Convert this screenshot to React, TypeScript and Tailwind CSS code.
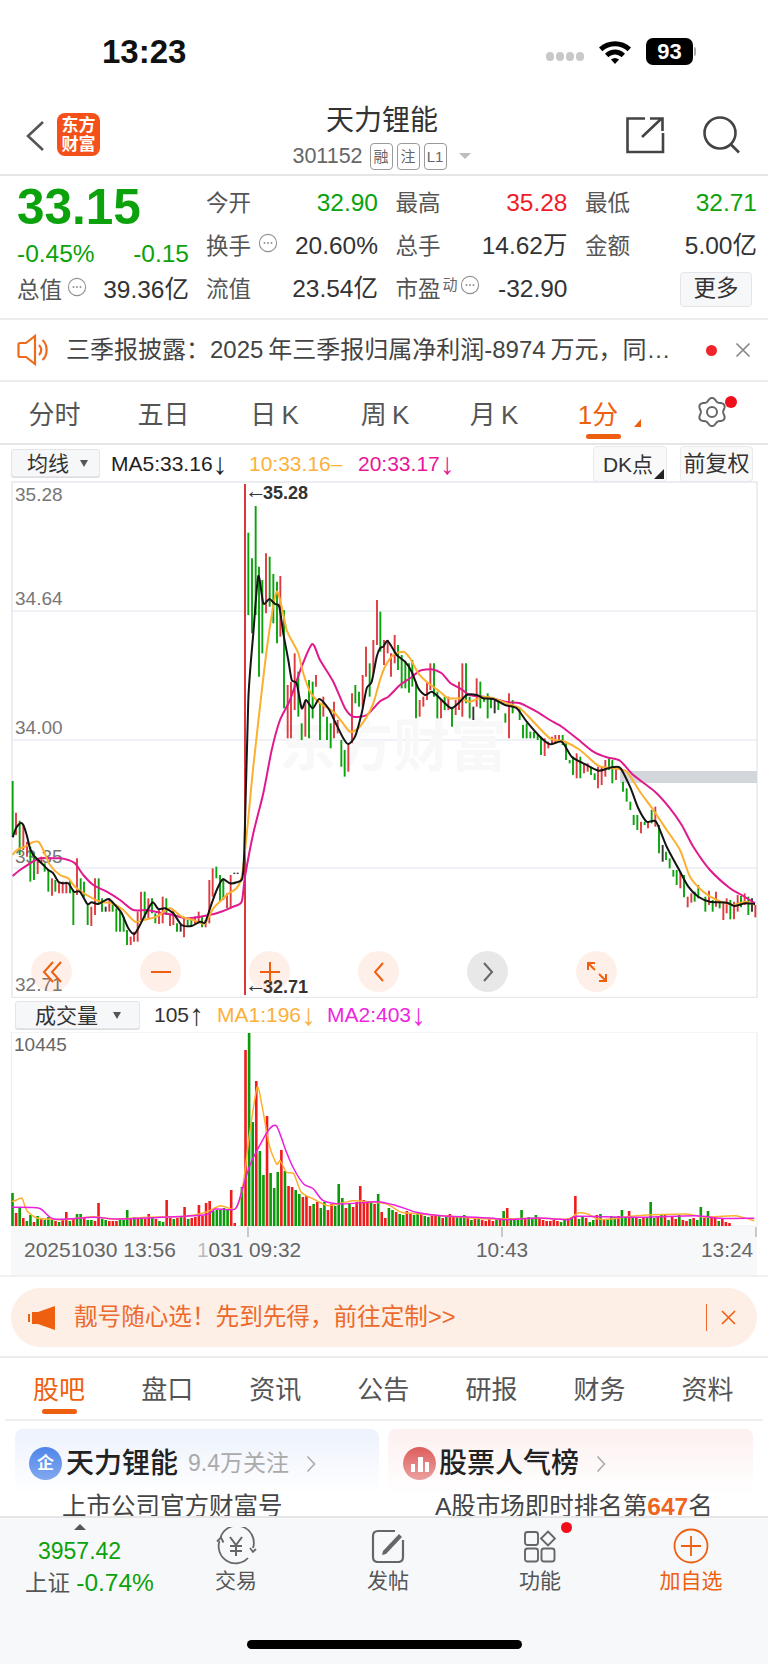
import React from "react";

const G = "#0ba20b", R = "#de3b3f", K = "#333333";
type P = [number, number];

const parseCandles = (s: string, ox: number) =>
  s.split(" ").map((t) => {
    const [x, a, b, c] = t.split(",");
    return { x: ox + Number(x) / 3, y1: 500 + Number(a) / 3, y2: 500 + Number(b) / 3, c: c === "g" ? G : c === "r" ? R : K };
  });

const c1 = parseCandles(
  "38,843,1010,g 48,938,1005,r 59,962,1065,g 70,975,1050,r 81,1025,1070,r 91,1040,1145,g 102,1060,1140,g 113,1075,1122,r 124,1070,1090,r 134,1090,1115,g 145,1110,1175,g 156,1135,1187,r 166,1140,1175,g 177,1145,1180,r 188,1145,1180,r 199,1145,1180,r 210,1140,1180,g 220,1170,1275,g 231,1075,1185,r 242,1135,1180,g 252,1145,1190,g 263,1215,1275,g 274,1220,1278,r 285,1135,1245,r 296,1135,1210,g 306,1195,1235,g 317,1220,1235,k 328,1195,1235,r 338,1210,1235,g 349,1225,1295,g 360,1235,1295,g 371,1250,1295,g 381,1290,1335,g 392,1310,1335,r 402,1295,1325,r 413,1235,1325,r 423,1175,1260,r 434,1175,1255,g 445,1195,1255,r 456,1195,1240,g 466,1240,1270,g 477,1225,1272,r 488,1190,1270,r 499,1195,1245,g 510,1245,1278,r 520,1230,1275,r 531,1270,1295,g 542,1275,1295,k 552,1255,1312,r 563,1260,1280,g 574,1260,1278,g 585,1250,1275,r 596,1235,1265,r 606,1250,1282,g 617,1260,1282,r 628,1140,1270,r 638,1105,1190,r 649,1100,1135,g 660,1125,1205,g 670,1135,1200,g 681,1180,1225,r 692,1125,1225,r 703,1118,1122,k 713,1118,1122,k 745,98,345,g 756,175,400,g 767,18,345,g 777,200,530,g 787,240,460,g 798,160,340,r 809,170,320,g 820,222,370,g 831,245,430,g 841,228,410,r 852,330,625,g 863,555,715,r 873,545,715,r 884,460,630,r 895,515,650,g 905,670,720,g 916,600,710,r 927,540,715,g 938,545,655,g 948,525,560,r 960,610,720,g 970,590,650,r 981,650,720,g 992,670,745,g 1002,605,715,r 1013,660,700,r 1024,720,800,g 1034,750,830,g 1045,730,815,r 1056,580,730,r 1066,555,610,g 1077,575,620,g 1088,525,620,r 1098,440,530,r 1109,490,590,g 1120,420,520,r 1131,300,435,r",
  0
);
const c2 = parseCandles(
  "1,335,455,g 12,420,495,r 23,420,460,r 33,460,530,r 44,405,490,r 54,435,510,g 65,465,565,g 76,485,565,g 87,490,578,g 97,480,560,g 108,545,655,g 119,600,650,r 130,590,620,r 141,548,600,r 151,490,570,r 162,490,590,g 172,575,655,g 183,600,655,r 194,590,630,g 205,590,630,r 216,620,680,g 227,600,645,r 237,545,630,r 247,490,650,r 258,490,610,g 269,590,655,g 280,620,660,k 290,535,620,r 301,545,625,g 312,590,605,g 323,580,655,g 333,595,625,g 344,595,640,k 355,605,630,g 376,640,668,g 387,580,715,r 398,600,640,g 419,625,660,g 429,675,715,g 440,670,715,g 451,695,715,g 462,695,715,g 473,705,720,g 483,710,765,g 494,715,768,r 505,725,745,r 516,710,735,r 526,705,730,r 537,705,725,r 548,705,735,g 558,730,780,g 569,780,790,g 579,770,825,g 590,760,835,r 601,770,835,g 612,790,820,r 623,790,815,r 633,800,825,g 644,820,840,g 654,800,865,r 665,800,855,r 676,780,830,r 687,775,810,g 697,780,850,g 708,800,840,r 729,845,875,g 740,865,905,g 751,905,930,g 761,945,975,g 772,945,990,g 783,965,1000,r 794,965,975,g 804,965,985,r 815,930,970,g 826,920,980,r 837,975,1060,g 848,1035,1085,k 858,1055,1080,g 869,1075,1105,g 880,1110,1130,g 890,1110,1155,g 901,1115,1165,r 912,1125,1192,g 923,1190,1222,r 934,1180,1208,r 944,1175,1205,g 955,1155,1195,g 976,1190,1235,g 987,1172,1215,r 998,1200,1235,g 1008,1175,1220,r 1019,1205,1225,g 1030,1205,1260,r 1040,1195,1240,r 1051,1200,1258,g 1062,1205,1258,r 1073,1185,1235,r 1083,1188,1222,g 1094,1180,1215,r 1105,1190,1245,g 1116,1195,1235,k 1126,1215,1252,r",
  380
);

const pts = (s: string, f: (x: number, y: number) => P): P[] =>
  s.split(" ").map((t) => {
    const [x, y] = t.split(",").map(Number);
    return f(x, y);
  });
const L = (x: number, y: number): P => [x / 3, 500 + y / 3];
const Rt = (x: number, y: number): P => [380 + x / 3, 500 + y / 3];
const V = (x: number, y: number): P => [x / 2.0417, 990 + y / 3];

const smooth = (p: P[]) => {
  let d = `M${p[0][0].toFixed(1)} ${p[0][1].toFixed(1)}`;
  for (let i = 0; i < p.length - 1; i++) {
    const a = p[Math.max(0, i - 1)], b = p[i], c = p[i + 1], e = p[Math.min(p.length - 1, i + 2)];
    const k = 0.12;
    d += `C${(b[0] + (c[0] - a[0]) * k).toFixed(1)} ${(b[1] + (c[1] - a[1]) * k).toFixed(1)} ${(c[0] - (e[0] - b[0]) * k).toFixed(1)} ${(c[1] - (e[1] - b[1]) * k).toFixed(1)} ${c[0].toFixed(1)} ${c[1].toFixed(1)}`;
  }
  return d;
};

const black = [
  ...pts("38,1012 48,985 60,970 70,975 80,1005 90,1045 100,1065 115,1080 130,1095 145,1110 160,1120 175,1145 190,1150 205,1150 222,1175 240,1175 262,1212 275,1207 295,1212 325,1197 345,1215 365,1240 385,1285 403,1302 420,1275 440,1235 458,1207 475,1227 495,1225 520,1240 545,1275 575,1278 600,1265 615,1268 630,1225 650,1170 668,1138 690,1150 710,1147 727,1135 733,1050 745,600 760,400 775,228 790,310 808,297 825,312 838,320 850,400 865,480 875,540 890,550 905,625 918,600 938,625 958,597 985,625 1005,665 1030,715 1045,732 1065,710 1085,640 1100,565 1115,545 1130,470", L),
  ...pts("0,445 10,440 22,422 35,440 50,465 75,485 95,515 115,565 135,585 155,575 175,590 195,610 215,625 240,605 260,585 290,585 310,595 340,597 375,615 410,625 440,665 480,710 510,733 545,725 575,770 610,790 655,812 690,803 720,803 750,860 775,925 800,965 828,965 860,1040 895,1105 925,1160 955,1190 990,1205 1040,1208 1065,1218 1095,1210 1125,1212", Rt),
];
const orange = [
  ...pts("38,1065 50,1050 75,1040 95,1028 115,1025 130,1050 150,1095 180,1125 205,1135 225,1160 260,1185 300,1205 335,1210 370,1230 405,1265 440,1258 470,1250 510,1225 545,1250 580,1260 615,1270 640,1225 680,1185 725,1130 760,800 800,450 830,275 860,390 880,430 895,460 910,520 930,575 960,610 985,625 1005,640 1025,665 1050,695 1075,685 1100,650 1120,610", L),
  ...pts("0,540 15,500 40,465 70,455 90,475 115,520 140,545 180,575 205,595 240,595 270,605 310,590 340,595 380,610 420,625 460,665 510,715 555,725 600,750 655,797 700,805 740,815 780,875 820,930 860,990 900,1050 930,1130 970,1175 1010,1200 1060,1215 1095,1205 1125,1215", Rt),
];
const magenta = [
  ...pts("38,1128 60,1110 90,1090 120,1075 150,1075 180,1075 205,1080 225,1090 250,1125 280,1155 320,1175 360,1200 400,1230 440,1230 480,1238 520,1245 560,1255 600,1250 650,1240 700,1220 725,1205 735,1130 760,1000 790,880 815,750 840,660 870,600 905,500 937,432 960,480 1000,545 1035,625 1060,650 1100,645", L),
  ...pts("0,604 25,590 60,555 90,535 120,512 155,508 185,520 210,548 240,565 270,585 310,590 345,597 385,607 420,610 470,635 510,660 545,680 590,715 640,755 680,772 720,782 760,825 825,875 870,925 905,975 940,1040 990,1110 1050,1165 1085,1185 1125,1210", Rt),
];
const vOrange = pts("24,638 35,632 45,628 55,665 75,687 100,690 130,692 190,683 230,690 300,685 380,682 420,670 450,650 480,660 495,600 510,430 525,295 535,350 550,470 565,525 572,515 585,550 600,555 615,610 640,630 670,650 720,635 760,640 790,645 820,670 860,675 900,680 1000,690 1100,688 1160,690 1180,672 1200,675 1220,690 1250,690 1300,680 1400,675 1440,685 1500,680 1540,695", V);
const vMagenta = pts("24,655 80,658 110,690 190,685 240,690 330,685 420,677 440,660 480,660 495,600 510,530 530,470 550,420 565,412 585,490 600,540 620,585 640,600 660,635 700,645 770,638 810,650 850,670 900,680 1000,687 1030,692 1100,687 1160,692 1180,682 1300,685 1420,680 1470,688 1540,688", V);

const vol =
  "33g 13r 18g 8r 5g 11g 4r 10g 8r 6g 9g 7g 5r 4g 6r 14r 5g 7r 12g 12g 8r 6g 6g 5r 23r 7g 6g 5r 5r 5r 6g 6g 16g 8r 9g 7r 7g 7r 12r 9g 7r 5g 4g 26r 8r 7g 8r 10g 19r 7g 8r 9r 21r 10r 23r 25r 15g 16g 16g 18g 17g 36r 3r 0g 39g 176r 193g 104g 145r 75g 51g 110r 53g 38g 54g 76r 55g 40r 39r 36g 32g 29r 30r 20r 22g 24r 18g 24g 16r 22r 20g 42g 28g 18r 22g 19r 24r 40r 26r 24r 24g 22r 32g 14r 8r 18g 16g 14r 12g 11g 15r 12r 11g 13g 12r 10g 9g 10r 11r 10g 8r 9g 12r 10r 9g 9g 11g 9r 6g 8r 7g 6r 5r 7r 5r 6g 8r 15g 18r 8g 7g 6g 16g 7r 9g 8g 11g 7r 6r 5r 5r 6r 5r 4g 7g 8r 9g 30r 7g 10g 8r 4g 6g 11r 12g 7r 6g 10g 9g 10r 16g 8g 15r 8g 9r 7g 8r 8g 24g 8g 10r 12g 12r 6g 9r 7r 11g 6r 5r 7g 8r 6g 19g 8r 15g 9r 10r 5g 7r 4r 3r";
const volBars = vol.split(" ").map((t, i) => ({ x: 12.5 + 3.585 * i, h: parseInt(t), c: t.endsWith("g") ? "#0a9a0a" : "#f01c1c" }));

const gearPath = (() => {
  const cx = 16, cy = 16;
  let d = "";
  for (let i = 0; i <= 96; i++) {
    const th = (i / 96) * Math.PI * 2 - Math.PI / 2;
    const r = 12.6 + 1.5 * Math.cos(6 * th + Math.PI * 3);
    const x = cx + r * Math.cos(th), y = cy + r * Math.sin(th);
    d += `${i === 0 ? "M" : "L"}${x.toFixed(2)} ${y.toFixed(2)}`;
  }
  return d + "Z";
})();

const Info = ({ className = "" }: { className?: string }) => (
  <svg width="20" height="20" viewBox="0 0 20 20" className={className}>
    <circle cx="10" cy="10" r="8.6" fill="none" stroke="#8f9296" strokeWidth="1.1" />
    <circle cx="6.5" cy="10" r="1" fill="#8f9296" />
    <circle cx="10" cy="10" r="1" fill="#8f9296" />
    <circle cx="13.5" cy="10" r="1" fill="#8f9296" />
  </svg>
);

const Cell = ({ label, value, color = "text-[#333]", extra }: { label: string; value: string; color?: string; extra?: React.ReactNode }) => (
  <div className="flex h-[43px] items-center justify-between">
    <div className="flex items-center">
      <span className="text-[22.5px] text-[#555]">{label}</span>
      {extra}
    </div>
    <span className={`text-[24.5px] ${color}`}>{value}</span>
  </div>
);

const Round = ({ children, gray }: { children: React.ReactNode; gray?: boolean }) => (
  <div className={`flex h-[41px] w-[41px] items-center justify-center rounded-full ${gray ? "bg-black/[0.09]" : "bg-[#f05a10]/[0.09]"}`}>{children}</div>
);

const Badge = ({ t }: { t: string }) => (
  <span className="ml-[4px] flex h-[27px] w-[23px] items-center justify-center rounded-[4px] border border-[#9a9a9a] text-[15px] leading-none text-[#666]">{t}</span>
);

const FootItem = ({ icon, label, color = "text-[#555]", w }: { icon: React.ReactNode; label: string; color?: string; w: string }) => (
  <div className={`flex flex-col items-center ${w}`}>
    <div className="flex h-[44px] items-center justify-center">{icon}</div>
    <span className={`mt-[-1px] text-[21px] leading-[28px] ${color}`}>{label}</span>
  </div>
);

const Arr = ({ children, className = "" }: { children: React.ReactNode; className?: string }) => (
  <span className={`text-[30px] leading-[26px] ${className}`}>{children}</span>
);

export default function App() {
  return (
    <div className="relative h-[1665px] w-[768px] overflow-hidden bg-white font-['Liberation_Sans','Noto_Sans_CJK_SC',sans-serif]">
      {/* status bar */}
      <div className="flex h-[88px] items-start">
        <span className="ml-[102px] mt-[32px] text-[33px] font-bold leading-[40px] text-[#111]">13:23</span>
        <div className="ml-auto mr-[72px] mt-[38px] flex items-center">
          <div className="mt-[10px] flex gap-[2px]">
            <i className="block h-[9px] w-[8px] rounded-[4px] bg-[#c8c9cb]" />
            <i className="block h-[9px] w-[8px] rounded-[4px] bg-[#c8c9cb]" />
            <i className="block h-[9px] w-[8px] rounded-[4px] bg-[#c8c9cb]" />
            <i className="block h-[9px] w-[8px] rounded-[4px] bg-[#c8c9cb]" />
          </div>
          <svg width="34" height="25" viewBox="0 0 34 25" className="ml-[14px]">
            <path d="M1 8.5C10 0 24 0 33 8.5L29.6 12.2C22.5 5.6 11.5 5.6 4.4 12.2Z" fill="#000" />
            <path d="M7 14.7C13 9.2 21 9.2 27 14.7L23.6 18.2C19.5 14.6 14.5 14.6 10.4 18.2Z" fill="#000" />
            <path d="M13 20.6C15.5 18.6 18.5 18.6 21 20.6L17 25Z" fill="#000" />
          </svg>
          <div className="ml-[14px] flex items-center">
            <span className="flex h-[27px] w-[47px] items-center justify-center rounded-[7px] bg-black text-[22px] font-bold leading-none text-white">93</span>
            <i className="ml-[1px] block h-[9px] w-[2px] rounded-r-[2px] bg-[#aaa]" />
          </div>
        </div>
      </div>

      {/* nav */}
      <div className="relative flex h-[88px] items-start border-b-2 border-[#e6e6e6]">
        <svg width="20" height="32" viewBox="0 0 20 32" className="ml-[25px] mt-[32px] shrink-0">
          <path d="M18 2L3 16L18 30" fill="none" stroke="#555" strokeWidth="2.6" />
        </svg>
        <div className="ml-[12px] mt-[25px] flex h-[43px] w-[43px] shrink-0 flex-col items-center justify-center rounded-[8px] bg-[#f4511a] text-[17px] font-bold leading-[19px] text-white">
          <span>东方</span>
          <span>财富</span>
        </div>
        <div className="ml-[182px] mt-[13px] flex w-[200px] flex-col items-center">
          <span className="text-[28px] leading-[40px] text-[#333]">天力锂能</span>
          <div className="mt-[1px] flex items-center">
            <span className="text-[21.5px] leading-[28px] text-[#666]">301152</span>
            <span className="ml-[3px] flex"><Badge t="融" /><Badge t="注" /><Badge t="L1" /></span>
            <svg width="14" height="8" viewBox="0 0 14 8" className="ml-[11px]"><path d="M1 1H13L7 7Z" fill="#bdbdbd" /></svg>
          </div>
        </div>
        <svg width="40" height="38" viewBox="0 0 40 38" className="ml-[143px] mt-[28px] shrink-0">
          <path d="M20 2.5H2.5V36H38V17" fill="none" stroke="#444" strokeWidth="2.6" />
          <path d="M17 21L36 3M25 2.5H37.5V15" fill="none" stroke="#444" strokeWidth="2.6" />
        </svg>
        <svg width="40" height="38" viewBox="0 0 40 38" className="ml-[37px] mt-[28px] shrink-0">
          <circle cx="18" cy="17" r="15.5" fill="none" stroke="#444" strokeWidth="2.6" />
          <path d="M29 28.5L37 36.5" stroke="#444" strokeWidth="2.6" />
        </svg>
      </div>

      {/* quote */}
      <div className="flex h-[144px] border-b-2 border-[#ececec]">
        <div className="ml-[17px] w-[172px] shrink-0">
          <div className="h-[63px] text-[49.5px] font-bold leading-[62px] text-[#0ba20b]">33.15</div>
          <div className="flex h-[30px] items-center justify-between text-[24.5px] leading-none text-[#0ba20b]">
            <span>-0.45%</span>
            <span>-0.15</span>
          </div>
          <div className="flex h-[43px] items-center justify-between">
            <div className="flex items-center">
              <span className="text-[22.5px] text-[#555]">总值</span>
              <Info className="mb-[8px] ml-[5px]" />
            </div>
            <span className="text-[24.5px] text-[#333]">39.36亿</span>
          </div>
        </div>
        <div className="ml-[17px] mt-[6px] grid w-[551px] grid-cols-[172px_172px_172px] content-start gap-x-[17.5px]">
          <Cell label="今开" value="32.90" color="text-[#0ba20b]" />
          <Cell label="最高" value="35.28" color="text-[#f01c2a]" />
          <Cell label="最低" value="32.71" color="text-[#0ba20b]" />
          <Cell label="换手" value="20.60%" extra={<Info className="mb-[8px] ml-[7px]" />} />
          <Cell label="总手" value="14.62万" />
          <Cell label="金额" value="5.00亿" />
          <Cell label="流值" value="23.54亿" />
          <Cell
            label="市盈"
            value="-32.90"
            extra={
              <span className="mb-[10px] ml-[2px] flex items-center">
                <span className="text-[15px] leading-none text-[#666]">动</span>
                <Info className="ml-[2px]" />
              </span>
            }
          />
          <div className="flex h-[43px] items-center justify-end">
            <span className="mr-[5px] flex h-[35px] w-[72px] items-center justify-center rounded-[4px] border border-[#e3e5e8] bg-[#f6f7f9] text-[22.5px] leading-none text-[#333]">更多</span>
          </div>
        </div>
      </div>

      {/* notice */}
      <div className="flex h-[62px] items-center border-b-2 border-[#ececec]">
        <svg width="32" height="34" viewBox="0 0 32 34" className="ml-[17px] shrink-0">
          <path d="M3 10H9L18 3V31L9 24H3C2 24 1.5 23.500 1.5 22.500V11.500C1.500 10.500 2 10 3 10Z" fill="none" stroke="#ee6a1c" strokeWidth="2.2" />
          <path d="M22 12C25 15 25 19 22 22M25.500 7C31 12 31 22 25.500 27" fill="none" stroke="#ee6a1c" strokeWidth="2.2" />
        </svg>
        <span className="ml-[17px] w-[590px] shrink-0 whitespace-nowrap text-[24px] text-[#444]">三季报披露：2025{"\u2009"}年三季报归属净利润-8974{"\u2009"}万元，同…</span>
        <i className="ml-[50px] block h-[11px] w-[11px] shrink-0 rounded-full bg-[#f0242c]" />
        <svg width="16" height="16" viewBox="0 0 16 16" className="ml-[18px] shrink-0">
          <path d="M1.500 1.500L14.500 14.500M14.500 1.500L1.500 14.500" stroke="#888" strokeWidth="1.700" />
        </svg>
      </div>

      {/* period tabs */}
      <div className="flex h-[63px] border-b-2 border-[#e6e6e6]">
        <div className="flex w-[109px] items-center justify-center pt-[6px] text-[26px] text-[#555]">分时</div>
        <div className="flex w-[109px] items-center justify-center pt-[6px] text-[26px] text-[#555]">五日</div>
        <div className="flex w-[113px] items-center justify-center pt-[6px] text-[26px] text-[#555]">日{"\u2009"}K</div>
        <div className="flex w-[108px] items-center justify-center pt-[6px] text-[26px] text-[#555]">周{"\u2009"}K</div>
        <div className="flex w-[110px] items-center justify-center pt-[6px] text-[26px] text-[#555]">月{"\u2009"}K</div>
        <div className="relative flex w-[105px] items-center justify-center pr-[7px] pt-[6px] text-[26px] text-[#ee5f10]">
          1分
          <span className="absolute bottom-[4px] left-[37px] h-[5px] w-[35px] rounded-[3px] bg-[#ee5f10]" />
          <svg width="7" height="8" viewBox="0 0 7 8" className="absolute left-[85px] top-[37px]"><path d="M7 0V8H0Z" fill="#ee5f10" /></svg>
        </div>
        <div className="relative flex w-[114px] items-center justify-center">
          <svg width="32" height="32" viewBox="0 0 32 32" className="mb-[2px] ml-[2px]">
            <path d={gearPath} fill="none" stroke="#666" strokeWidth="2" strokeLinejoin="round" />
            <circle cx="16" cy="16" r="5" fill="none" stroke="#666" strokeWidth="2" />
          </svg>
          <i className="absolute left-[71px] top-[14px] block h-[12px] w-[12px] rounded-full bg-[#f0101c]" />
        </div>
      </div>

      {/* chart toolbar */}
      <div className="flex h-[36px] items-start">
        <div className="ml-[11px] mt-[4px] flex h-[28px] w-[89px] items-center rounded-[3px] border border-[#e3e5e8] bg-[#f6f7f9] shadow-[0_1px_0_#dcdde0]">
          <span className="ml-[15px] text-[21px] leading-none text-[#333]">均线</span>
          <svg width="8" height="7" viewBox="0 0 8 7" className="ml-[11px]"><path d="M0 0H8L4 7Z" fill="#555" /></svg>
        </div>
        <div className="ml-[11px] mt-[5px] flex w-[470px] items-center text-[21px] leading-[28px]">
          <span className="flex w-[138px] items-center text-[#222]">MA5:33.16<Arr>↓</Arr></span>
          <span className="w-[109px] text-[#fbb13c]">10:33.16–</span>
          <span className="flex items-center text-[#e7169a]">20:33.17<Arr>↓</Arr></span>
        </div>
        <div className="relative ml-[12px] mt-[1px] flex h-[36px] w-[74px] items-center justify-center rounded-[4px] border border-[#e9eaec] bg-[#f9f9fa] pr-[4px] text-[21px] leading-none text-[#333]">
          DK点
          <svg width="10" height="10" viewBox="0 0 10 10" className="absolute bottom-[2px] right-[2px]"><path d="M10 0V10H0Z" fill="#222" /></svg>
        </div>
        <div className="ml-[13px] mt-[1px] flex h-[36px] w-[73px] items-center justify-center rounded-[4px] border border-[#e9eaec] bg-[#f9f9fa] text-[22px] leading-none text-[#333]">前复权</div>
      </div>

      {/* main chart */}
      <div className="relative h-[517px]">
        <svg width="768" height="517" viewBox="0 481 768 517" className="block">
          <rect x="12" y="482" width="745" height="515.500" fill="none" stroke="#e6e8ee" strokeWidth="1.500" />
          {[611, 740, 868].map((y) => (
            <line key={y} x1="12" x2="757" y1={y} y2={y} stroke="#e9ecf2" strokeWidth="1.500" />
          ))}
          <text x="279" y="766" fontSize="57" fontWeight="700" fill="#f8f8f9">东方财富</text>
          <rect x="620" y="771" width="137" height="12" fill="#d3d6da" />
          <text x="15" y="501" fontSize="19" fill="#777">35.28</text>
          <text x="15" y="605" fontSize="19" fill="#777">34.64</text>
          <text x="15" y="734" fontSize="19" fill="#777">34.00</text>
          <text x="15" y="863" fontSize="19" fill="#777">33.35</text>
          <text x="15" y="991" fontSize="19" fill="#777">32.71</text>
          {[...c1, ...c2].map((b, i) => (
            <line key={i} x1={b.x} x2={b.x} y1={b.y1} y2={b.y2} stroke={b.c} strokeWidth="1.900" />
          ))}
          <line x1="245" x2="245" y1="484" y2="995" stroke="#d8383c" strokeWidth="2" />
          <path d={smooth(magenta)} fill="none" stroke="#e0198f" strokeWidth="2" />
          <path d={smooth(orange)} fill="none" stroke="#fbb030" strokeWidth="2" />
          <path d={smooth(black)} fill="none" stroke="#151515" strokeWidth="2" />
          <text x="245" y="498" fontSize="22" fill="#333">←</text>
          <text x="263" y="499" fontSize="18" fontWeight="700" fill="#333">35.28</text>
          <text x="245" y="992" fontSize="22" fill="#333">←</text>
          <text x="263" y="993" fontSize="18" fontWeight="700" fill="#333">32.71</text>
        </svg>
        <div className="absolute left-[31px] top-[470px] flex gap-[68px]">
          <Round>
            <svg width="22" height="24" viewBox="0 0 22 24"><path d="M12 2L3 12L12 22M20 2L11 12L20 22" fill="none" stroke="#ee5f10" strokeWidth="2" /></svg>
          </Round>
          <Round>
            <svg width="20" height="4" viewBox="0 0 20 4"><path d="M0 2H20" stroke="#ee5f10" strokeWidth="2" /></svg>
          </Round>
          <Round>
            <svg width="20" height="20" viewBox="0 0 20 20"><path d="M0 10H20M10 0V20" stroke="#ee5f10" strokeWidth="2" /></svg>
          </Round>
          <Round>
            <svg width="12" height="24" viewBox="0 0 12 24"><path d="M10 3L2 12L10 21" fill="none" stroke="#ee5f10" strokeWidth="2" /></svg>
          </Round>
          <Round gray>
            <svg width="12" height="24" viewBox="0 0 12 24"><path d="M2 3L10 12L2 21" fill="none" stroke="#666" strokeWidth="2" /></svg>
          </Round>
          <Round>
            <svg width="22" height="22" viewBox="0 0 22 22"><path d="M2 9V2H9M2 2L9 9M20 13V20H13M20 20L13 13" fill="none" stroke="#ee5f10" strokeWidth="2" /></svg>
          </Round>
        </div>
      </div>

      {/* volume toolbar */}
      <div className="flex h-[34px] items-center">
        <div className="ml-[15px] flex h-[28px] w-[125px] items-center rounded-[3px] border border-[#e3e5e8] bg-[#f6f7f9] shadow-[0_1px_0_#dcdde0]">
          <span className="ml-[19px] text-[21px] leading-none text-[#333]">成交量</span>
          <svg width="8" height="7" viewBox="0 0 8 7" className="ml-[15px]"><path d="M0 0H8L4 7Z" fill="#555" /></svg>
        </div>
        <div className="ml-[14px] flex items-center text-[21px] leading-[28px]">
          <span className="flex w-[63px] items-center text-[#333]">105<Arr>↑</Arr></span>
          <span className="flex w-[110px] items-center text-[#fbb13c]">MA1:196<Arr>↓</Arr></span>
          <span className="flex items-center text-[#ee26e0]">MA2:403<Arr>↓</Arr></span>
        </div>
      </div>

      {/* volume chart + axis */}
      <svg width="768" height="245" viewBox="0 1033 768 245" className="block">
        <rect x="11" y="1228" width="746" height="48.500" fill="#f7f8fa" />
        <rect x="11.500" y="1033" width="745.500" height="194" fill="none" stroke="#eceef2" strokeWidth="1.200" />
        <line x1="0" x2="768" y1="1277" y2="1277" stroke="#ececec" strokeWidth="1.500" />
        <text x="14" y="1052" fontSize="19" fill="#666">10445</text>
        {volBars.map((b, i) => (
          <rect key={i} x={b.x - 1.3} y={1227 - b.h} width="2.600" height={b.h} fill={b.c} />
        ))}
        <path d={smooth(vOrange)} fill="none" stroke="#fbb030" strokeWidth="1.500" />
        <path d={smooth(vMagenta)} fill="none" stroke="#ea1fe0" strokeWidth="1.500" />
        {[248, 502, 756].map((x) => (
          <line key={x} x1={x} x2={x} y1="1228" y2="1238" stroke="#999" strokeWidth="1" />
        ))}
        <text x="24" y="1258" fontSize="21" fill="#666">20251030 13:56</text>
        <text x="197" y="1258" fontSize="20.800" fill="#666"><tspan fill="#bbb">1</tspan>031 09:32</text>
        <text x="476" y="1258" fontSize="20.800" fill="#666">10:43</text>
        <text x="701" y="1258" fontSize="20.800" fill="#666">13:24</text>
      </svg>

      {/* banner */}
      <div className="flex h-[81px] items-start border-b-2 border-[#ececec]">
        <div className="ml-[11px] mt-[11px] flex h-[59px] w-[746px] items-center rounded-[30px] bg-[#fdeee6]">
          <svg width="28" height="24" viewBox="0 0 28 24" className="ml-[17px] shrink-0">
            <path d="M0 8H2V16H0ZM4 6H10L27 0V24L10 18H4Z" fill="#ee5f10" />
          </svg>
          <span className="ml-[18px] w-[632px] shrink-0 text-[23.6px] leading-none text-[#ec6a2c]">靓号随心选！先到先得，前往定制&gt;&gt;</span>
          <i className="block h-[27px] w-[1px] shrink-0 bg-[#ec6a2c]" />
          <svg width="15" height="15" viewBox="0 0 15 15" className="ml-[14px] shrink-0">
            <path d="M1 1L14 14M14 1L1 14" stroke="#ee5f10" strokeWidth="1.600" />
          </svg>
        </div>
      </div>

      {/* section tabs */}
      <div className="relative mx-[5px] flex h-[63px] border-b-2 border-[#eeeeee]">
        {["股吧", "盘口", "资讯", "公告", "研报", "财务", "资料"].map((t, i) => (
          <div key={t} className={`flex w-[108.100px] items-center justify-center pt-[4px] text-[26px] ${i === 0 ? "text-[#ee5f10]" : "text-[#555]"}`}>{t}</div>
        ))}
        <span className="absolute bottom-[5px] left-[37px] h-[5px] w-[35px] rounded-[3px] bg-[#ee5f10]" />
      </div>

      {/* cards */}
      <div className="flex h-[95px] gap-[9px] overflow-hidden pl-[15px] pt-[8px]">
        <div className="h-[130px] w-[364px] shrink-0 rounded-[8px] bg-gradient-to-b from-[#edf2fc] to-white to-50%">
          <div className="ml-[14px] mt-[18px] flex h-[33px] items-center">
            <span className="flex h-[33px] w-[33px] shrink-0 items-center justify-center rounded-full bg-gradient-to-b from-[#4f86ea] to-[#82a8ee] text-[17px] font-bold leading-none text-white">企</span>
            <span className="ml-[4px] text-[28px] font-medium leading-none text-[#222]">天力锂能</span>
            <span className="ml-[10px] text-[23px] leading-none text-[#aaa]">9.4万关注</span>
            <svg width="10" height="18" viewBox="0 0 10 18" className="ml-[17px]"><path d="M1.500 1.500L8.500 9L1.500 16.500" fill="none" stroke="#aaa" strokeWidth="1.600" /></svg>
          </div>
          <div className="ml-[47px] mt-[12px] text-[24.5px] leading-[30px] text-[#444]">上市公司官方财富号</div>
        </div>
        <div className="h-[130px] w-[365px] shrink-0 rounded-[8px] bg-gradient-to-b from-[#fdf0f0] to-white to-50%">
          <div className="ml-[15px] mt-[18px] flex h-[33px] items-center">
            <span className="flex h-[33px] w-[33px] shrink-0 items-center justify-center rounded-full bg-gradient-to-b from-[#dc5d5d] to-[#eaa0a0]">
              <svg width="20" height="16" viewBox="0 0 20 16"><path d="M1 8h4v8H1ZM8 1h5v15H8ZM15 6h4v10h-4Z" fill="#fff" /></svg>
            </span>
            <span className="ml-[3px] text-[28px] font-medium leading-none text-[#222]">股票人气榜</span>
            <svg width="10" height="18" viewBox="0 0 10 18" className="ml-[17px]"><path d="M1.500 1.500L8.500 9L1.500 16.500" fill="none" stroke="#aaa" strokeWidth="1.600" /></svg>
          </div>
          <div className="ml-[47px] mt-[12px] text-[24.5px] leading-[30px] text-[#444]">A股市场即时排名第<span className="font-bold text-[#f0651e]">647</span>名</div>
        </div>
      </div>

      {/* footer */}
      <div className="relative h-[148px] border-t-2 border-[#e6e6e8] bg-[#f7f8fa]">
        <div className="flex">
          <div className="flex w-[165px] flex-col items-start pt-[6px]">
            <svg width="12" height="6" viewBox="0 0 12 6" className="ml-[74px]"><path d="M6 0L12 6H0Z" fill="#555" /></svg>
            <span className="ml-[38px] mt-[7px] text-[23px] leading-[28px] text-[#0ba20b]">3957.42</span>
            <span className="ml-[25px] mt-[2px] text-[22.5px] leading-[32px] text-[#555]">上证 <span className="text-[24.5px] text-[#0ba20b]">-0.74%</span></span>
          </div>
          <div className="ml-[-5px] flex pt-[6px]">
            <FootItem
              w="w-[152px]"
              label="交易"
              icon={
                <svg width="42" height="38" viewBox="0 0 42 38">
                  <path d="M5.500 10.500A17 17 0 0 1 38 21M33 31A17 17 0 0 1 4.500 14" fill="none" stroke="#666" strokeWidth="1.800" />
                  <path d="M2 14.500L6 10.500L8.500 15.500M35 21L38 25L41 22" fill="none" stroke="#666" strokeWidth="1.800" />
                  <path d="M15 10L21 18L27 10M21 18V29M15 19H27M15 24H27" fill="none" stroke="#666" strokeWidth="2" />
                </svg>
              }
            />
            <FootItem
              w="w-[152px]"
              label="发帖"
              icon={
                <svg width="34" height="34" viewBox="0 0 34 34">
                  <path d="M24 2H7C4 2 2 4 2 7V28C2 31 4 33 7 33H27C30 33 32 31 32 28V11" fill="none" stroke="#666" strokeWidth="2.200" />
                  <path d="M12 22L28 5L31 8L15 25L11 26Z" fill="#666" />
                </svg>
              }
            />
            <FootItem
              w="w-[152px]"
              label="功能"
              icon={
                <svg width="32" height="33" viewBox="0 0 32 33">
                  <rect x="1" y="2" width="13" height="13" rx="2.500" fill="none" stroke="#666" strokeWidth="1.900" />
                  <path d="M24 1.500L31 8.500L24 15.500L17 8.500Z" fill="none" stroke="#666" strokeWidth="1.900" />
                  <rect x="1" y="18.500" width="13" height="13" rx="2.500" fill="none" stroke="#666" strokeWidth="1.900" />
                  <rect x="17.500" y="18.500" width="13" height="13" rx="2.500" fill="none" stroke="#666" strokeWidth="1.900" />
                </svg>
              }
            />
            <FootItem
              w="w-[150px]"
              label="加自选"
              color="text-[#ee5f10]"
              icon={
                <svg width="36" height="36" viewBox="0 0 36 36">
                  <circle cx="18" cy="18" r="16.500" fill="none" stroke="#ee5f10" strokeWidth="1.800" />
                  <path d="M18 8V28M8 18H28" stroke="#ee5f10" strokeWidth="1.800" />
                </svg>
              }
            />
          </div>
        </div>
        <i className="absolute left-[561px] top-[4px] block h-[11px] w-[11px] rounded-full bg-[#f0101c]" />
        <i className="absolute bottom-[15px] left-[247px] block h-[9px] w-[275px] rounded-[5px] bg-black" />
      </div>
    </div>
  );
}
